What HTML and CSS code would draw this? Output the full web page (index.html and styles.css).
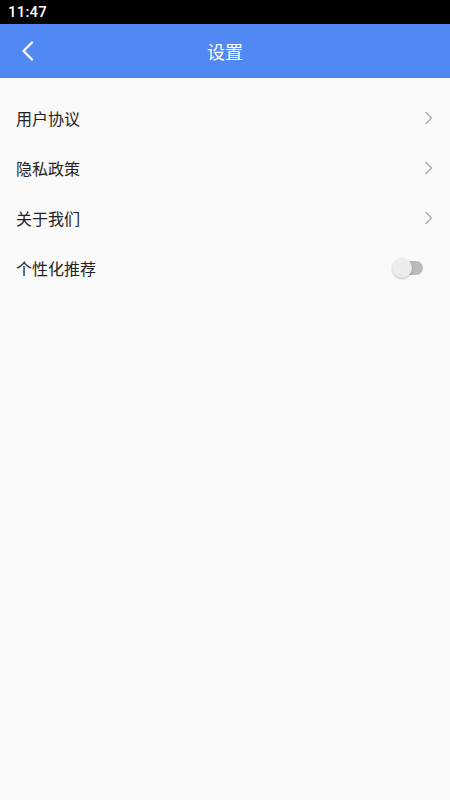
FILE: index.html
```html
<!DOCTYPE html>
<html lang="zh">
<head>
<meta charset="utf-8">
<title>设置</title>
<link rel="stylesheet" href="styles.css">
</head>
<body>
<div class="statusbar"><span class="time">11:47</span></div>
<header class="appbar">
  <div class="back">
    <svg width="14" height="20" viewBox="0 0 14 20"><path d="M11 1.5 L2.5 10 L11 18.5" fill="none" stroke="#fff" stroke-width="2.2" stroke-linecap="round" stroke-linejoin="round"/></svg>
  </div>
  <div class="title">设置</div>
</header>
<main class="list">
  <div class="row"><span class="label">用户协议</span><svg class="chev" width="9" height="14" viewBox="0 0 9 14"><path d="M1.5 1 L7.5 7 L1.5 13" fill="none" stroke="#a8a8a8" stroke-width="1.3"/></svg></div>
  <div class="row"><span class="label">隐私政策</span><svg class="chev" width="9" height="14" viewBox="0 0 9 14"><path d="M1.5 1 L7.5 7 L1.5 13" fill="none" stroke="#a8a8a8" stroke-width="1.3"/></svg></div>
  <div class="row"><span class="label">关于我们</span><svg class="chev" width="9" height="14" viewBox="0 0 9 14"><path d="M1.5 1 L7.5 7 L1.5 13" fill="none" stroke="#a8a8a8" stroke-width="1.3"/></svg></div>
  <div class="row"><span class="label">个性化推荐</span><span class="switch"><span class="thumb"></span></span></div>
</main>
</body>
</html>
```
FILE: styles.css
```css
html, body {
  margin: 0;
  padding: 0;
}
body {
  width: 450px;
  height: 800px;
  background: #fafafa;
  font-family: "Noto Sans CJK SC", "Roboto", sans-serif;
  overflow: hidden;
}
.statusbar {
  height: 24px;
  background: #000;
  display: flex;
  align-items: center;
  padding-left: 8px;
}
.time {
  color: #fff;
  font-family: "Roboto", sans-serif;
  font-size: 15px;
  font-weight: 500;
  letter-spacing: 0.2px;
}
.appbar {
  height: 54px;
  background: #5189f4;
  display: flex;
  align-items: center;
  position: relative;
}
.back {
  width: 14px;
  height: 20px;
  margin-left: 21px;
  display: flex;
}
.title {
  position: absolute;
  left: 0;
  right: 0;
  text-align: center;
  color: #fff;
  font-size: 18px;
  pointer-events: none;
}
.list {
  padding-top: 15px;
}
.row {
  height: 50px;
  display: flex;
  align-items: center;
  justify-content: space-between;
  padding: 0 17px 0 16px;
}
.label {
  font-size: 16px;
  color: #222;
}
.chev {
  display: block;
}
.switch {
  width: 28px;
  height: 14px;
  border-radius: 7px;
  background: #bababa;
  position: relative;
  margin-right: 10px;
}
.thumb {
  position: absolute;
  left: -3px;
  top: -3px;
  width: 20px;
  height: 20px;
  border-radius: 50%;
  background: #ececec;
  box-shadow: 0 1px 2px rgba(0,0,0,0.25);
}
```
